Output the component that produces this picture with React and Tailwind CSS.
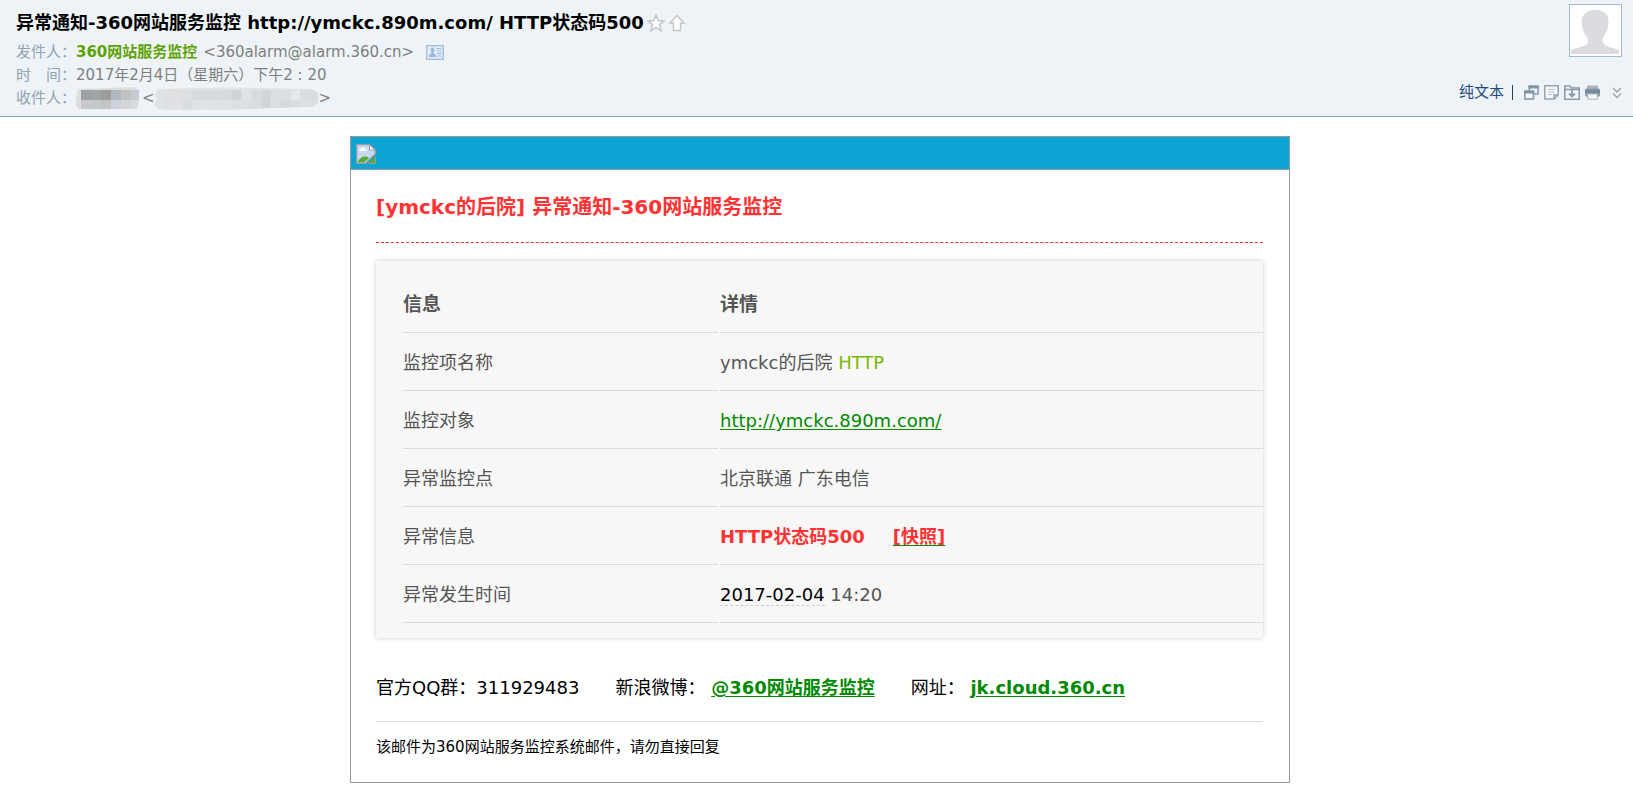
import React from 'react';

const rows = [
  { label: '监控项名称', value: <>ymckc的后院 <span className="text-[#7ab900]">HTTP</span></> },
  { label: '监控对象', value: <a href="http://ymckc.890m.com/" className="text-[#008a00] underline underline-offset-2">http://ymckc.890m.com/</a> },
  { label: '异常监控点', value: '北京联通 广东电信' },
  {
    label: '异常信息',
    value: (
      <span className="font-bold text-[#ff3333]">
        HTTP状态码500
        <a href="#snapshot" className="ml-7 underline decoration-[#008a00] underline-offset-2">[快照]</a>
      </span>
    ),
  },
  { label: '异常发生时间', value: <><span className="border-b border-dashed border-[#cccccc] text-black">2017-02-04</span> 14:20</> },
];

// hidden recipient, two rows of 10px blocks each
const nameTop = ['#9f9fa8', '#9fa5a5', '#9d9d9b', '#b0b8c1', '#c1c2c1', '#c7cad3'];
const nameLow = ['#c8c8cd', '#c8c8cb', '#c3c4c5', '#cdd2da', '#d1d6da', '#d8dade'];
const mailTop = ['#dfe1e3', '#e1dfdf', '#dcdfe1', '#d8dbdd', '#d6d9db', '#d8dadd', '#d6d9dc', '#cfd3d5', '#dfe2e5', '#d8dbdd', '#d3d6d9', '#dcdfe1', '#dadee0', '#e4e8eb', '#dadddf', '#d9dcde'];
const mailLow = ['#dde0e3', '#dfe1e4', '#d9dde0', '#e0e3e5', '#e1e4e6', '#e0e3e5', '#dfe2e4', '#dde0e2', '#dcdfe1', '#d9dcdf', '#d0d4d7', '#dde0e3', '#d5d8da', '#d9dcde', '#dcdfe2', '#dde0e3'];

const NameMosaic = () => (
  <svg width="64" height="23" viewBox="0 0 64 23" aria-hidden="true">
    <path d="M2 2L58 0l5 3v15l-3 4H3l-3-3v-8z" fill="#dcdfdf" />
    {nameTop.map((c, i) => <rect key={i} x={5 + i * 10} y="3" width={i === 5 ? 8 : 10} height="10" fill={c} />)}
    {nameLow.map((c, i) => <rect key={i} x={5 + i * 10} y="13" width={i === 5 ? 6 : 10} height="9" fill={c} />)}
  </svg>
);

const MailMosaic = () => (
  <svg width="164" height="23" viewBox="0 0 167 23" aria-hidden="true">
    <clipPath id="smear">
      <path d="M3 2l25-1 50-1 82 2 6 4v9l-4 5-40 1-45 2H4l-4-4V16l2-4-2-4z" />
    </clipPath>
    <g clipPath="url(#smear)">
      <rect width="167" height="23" fill="#dfe3e5" />
      {mailTop.map((c, i) => <rect key={i} x={8 + i * 10} y="3" width="10" height="10" fill={c} />)}
      {mailLow.map((c, i) => <rect key={i} x={8 + i * 10} y="13" width="10" height="10" fill={c} />)}
    </g>
  </svg>
);

const StarIcon = () => (
  <svg width="18" height="18" viewBox="0 0 18 18" fill="#fff" stroke="#c3c6c8" strokeWidth="1.5" aria-hidden="true">
    <path d="M9 1l2.2 5.6 6 .3-4.7 3.7 1.7 6L9 13.3l-5.2 3.3 1.7-6L.8 6.900l6-.3z" />
  </svg>
);

const ArrowIcon = () => (
  <svg width="18" height="18" viewBox="0 0 18 18" fill="#fff" stroke="#c3c6c8" strokeWidth="1.5" aria-hidden="true">
    <path d="M9 1.500l7 7.500h-3.500v7.500h-7V9H2z" />
  </svg>
);

const CardIcon = () => (
  <svg width="18" height="15" viewBox="0 0 18 15" aria-hidden="true">
    <rect x=".7" y=".7" width="16.600" height="13.600" fill="#e4eefa" stroke="#a6c1dc" strokeWidth="1.400" />
    <path d="M6.500 2.500c1.500 0 2 1 2 2.300S7.700 7 7.500 7.500s2.500 1.500 2.500 3V12H3v-1.500c0-1.500 2.500-2.500 2.500-3S4.500 6 4.500 4.800s.5-2.300 2-2.300z" fill="#9fbad6" />
    <path d="M10.500 3.500h5M10.500 6h5M11 8.500h4.500M11 11h4.500" stroke="#9fbad6" strokeWidth="1.200" />
  </svg>
);

const Avatar = () => (
  <svg width="53" height="53" viewBox="0 0 53 53" className="border border-[#a5bad2] bg-white" aria-label="头像" role="img">
    <path d="M1 51v-4c6-3 13-3 17-7 2-3 0-6-2-9-3-4-4-9-4-15 1-7 7-11 14-11s14 4 14 11c0 6-1 11-4 15-2 3-3 6-1 9 3 4 10 4 16 7v4z" fill="#dbdce0" />
  </svg>
);

const WindowsIcon = () => (
  <svg width="15" height="15" viewBox="0 0 15 15" fill="#f4f7f9" stroke="#8d9cab" strokeWidth="1.600" aria-hidden="true">
    <rect x="5.300" y="1.300" width="8.700" height="7.700" />
    <path d="M4.500 2h10.300" stroke="#8092a3" strokeWidth="3" />
    <rect x=".8" y="6.300" width="8.700" height="7.700" />
    <path d="M0 7h10.300" stroke="#8092a3" strokeWidth="3" />
  </svg>
);

const NoteIcon = () => (
  <svg width="15" height="15" viewBox="0 0 15 15" fill="#f6f8f9" stroke="#95a3b1" strokeWidth="1.500" aria-hidden="true">
    <path d="M.8.800h13.400v9l-4 4.200H.8zM14 10h-4v4" />
    <path d="M4 4.500h7M4 7h7M4 9.500h4" stroke="#bcc5ce" strokeWidth="1" />
  </svg>
);

const FolderIcon = () => (
  <svg width="16" height="15" viewBox="0 0 16 15" fill="#f4f7f9" stroke="#8d9dac" strokeWidth="1.600" aria-hidden="true">
    <path d="M.8 14.200V1h5l1.700 2h7.700v11.200z" />
    <path d="M1 4.500h14" />
    <path d="M8 5v6M5 8.500l3 3 3-3" fill="none" strokeWidth="1.800" />
  </svg>
);

const PrintIcon = () => (
  <svg width="15" height="15" viewBox="0 0 15 15" aria-hidden="true">
    <path d="M2 .5h11V4H2z" fill="#a9b5c0" />
    <rect y="3.500" width="15" height="8" rx="1.500" fill="#8c9cab" />
    <path d="M0 5h15v3H0z" fill="#75889a" />
    <path d="M2.700 9h9.600v5.200H2.700z" fill="#f6f8f9" stroke="#a9b5c0" />
  </svg>
);

const MoreIcon = () => (
  <svg width="10" height="12" viewBox="0 0 10 12" fill="none" stroke="#9aa0a6" strokeWidth="1.300" aria-hidden="true">
    <path d="M1 1l4 4 4-4M1 6.500l4 4 4-4" />
  </svg>
);

const BrokenImage = () => (
  <svg width="20" height="20" viewBox="0 0 20 20" role="img" aria-label="logo">
    <path d="M.7.700h13L19.300 6v4L9.500 19.300H.7z" fill="#c8d9f6" stroke="#9a9a9a" strokeWidth="1.300" />
    <path d="M13.500 1v5h5.500z" fill="#fff" stroke="#9a9a9a" />
    <path d="M3 7c0-2 2-2 2.500-3C7 2.500 9 4 9 5c2 0 2 2 1 2z" fill="#fff" />
    <path d="M1.500 18.500c2-5 7-8 11.500-4.500l-5 4.500z" fill="#56ad32" />
    <path d="M19.500 12.500v7H12z" fill="#56ad32" />
    <path d="M19.500 12.500v7H12" fill="none" stroke="#9a9a9a" />
  </svg>
);

const tools = [
  { name: '新窗口打开', Icon: WindowsIcon },
  { name: '便签', Icon: NoteIcon },
  { name: '移动到', Icon: FolderIcon },
  { name: '打印', Icon: PrintIcon },
];

const MailHeader = () => (
  <header className="flex justify-between border-b border-[#86a0b8] bg-[#edf3f6] pb-1.5 pl-4 pr-[11px] pt-1 text-[15px] leading-[23px] text-[#7f7f7f]">
    <div className="pt-[5px]">
      <div className="mb-[5px] flex h-[27px] items-center gap-[3px]">
        <h1 className="whitespace-nowrap text-[18px] font-bold text-black">
          异常通知-360网站服务监控 http://ymckc.890m.com/ HTTP状态码500
        </h1>
        <button aria-label="星标"><StarIcon /></button>
        <button aria-label="置顶"><ArrowIcon /></button>
      </div>
      <dl className="grid grid-cols-[60px_auto] whitespace-nowrap">
        <dt className="text-[#92a3b3]">发件人：</dt>
        <dd className="flex items-center">
          <span className="mr-1.5 font-bold text-[#5fa207]">360网站服务监控</span>
          <span>&lt;360alarm@alarm.360.cn&gt;</span>
          <button aria-label="联系人" className="ml-3"><CardIcon /></button>
        </dd>
        <dt className="text-[#92a3b3]">时　间：</dt>
        <dd>2017年2月4日（星期六）下午2 : 20</dd>
        <dt className="text-[#92a3b3]">收件人：</dt>
        <dd className="flex items-center">
          <NameMosaic />
          <span className="ml-0.5">&lt;</span>
          <MailMosaic />
          <span>&gt;</span>
        </dd>
      </dl>
    </div>
    <div className="flex flex-col items-end justify-between pb-1.5">
      <Avatar />
      <div className="flex items-center text-[#1e4a80]">
        <a href="#text">纯文本</a>
        <span className="ml-2 mr-[11px] h-[15px] w-px bg-[#2a3f60]" />
        <div className="flex items-center gap-[5px]">
          {tools.map(({ name, Icon }) => (
            <button key={name} aria-label={name}><Icon /></button>
          ))}
        </div>
        <button aria-label="更多" className="ml-3"><MoreIcon /></button>
      </div>
    </div>
  </header>
);

const cell = 'h-14 border-b border-[#dbdbdb] p-0 text-left align-middle';

const App = () => {
  return (
    <div className="bg-white font-['DejaVu_Sans','Noto_Sans_CJK_SC',sans-serif]">
      <MailHeader />
      <main className="py-[19px] pl-[7px]">
        <article className="mx-auto w-full max-w-[940px] border border-[#999999]">
          <div className="border-b border-[#999999] bg-[#0da4d3] px-[5px] pb-[5px] pt-[7px]">
            <BrokenImage />
          </div>
          <div className="pl-[25px] pr-[26px]">
            <h2 className="border-b border-dashed border-[#ff3333] pb-5 pt-[22px] text-[20px] font-bold leading-[30px] text-[#ff3333]">
              [ymckc的后院] 异常通知-360网站服务监控
            </h2>
            <section className="mt-[18px] bg-[#f7f7f7] pb-[13px] pl-[25px] pt-[14px] shadow-[0_0_5px_#cccccc]">
              <table className="w-[calc(100%+2px)] table-fixed border-separate border-spacing-[2px] text-[18px] text-[#555555]">
                <thead>
                  <tr className="text-[19px]">
                    <th className={cell + ' w-[315px]'}>信息</th>
                    <th className={cell}>详情</th>
                  </tr>
                </thead>
                <tbody>
                  {rows.map((row) => (
                    <tr key={row.label}>
                      <td className={cell}>{row.label}</td>
                      <td className={cell}>{row.value}</td>
                    </tr>
                  ))}
                </tbody>
              </table>
            </section>
            <div className="mt-[34px] flex flex-wrap gap-x-9 border-b border-[#dbdbdb] pb-[17px] text-[18px] leading-8 text-black">
              <span>官方QQ群：311929483</span>
              <span>新浪微博： <a href="#weibo" className="font-bold text-[#008a00] underline underline-offset-2">@360网站服务监控</a></span>
              <span>网址： <a href="http://jk.cloud.360.cn" className="font-bold text-[#008a00] underline underline-offset-2">jk.cloud.360.cn</a></span>
            </div>
            <p className="pb-[23px] pt-[14px] text-[15px] leading-[23px] text-black">该邮件为360网站服务监控系统邮件，请勿直接回复</p>
          </div>
        </article>
      </main>
    </div>
  );
};

export default App;
